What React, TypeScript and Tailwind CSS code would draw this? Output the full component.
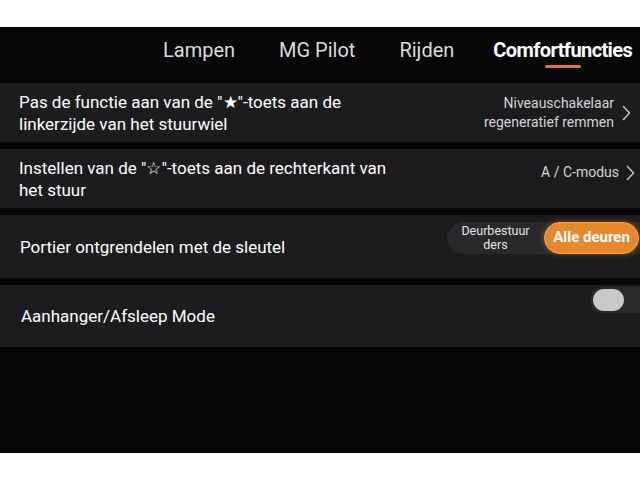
import React from "react";

const font = { fontFamily: "Roboto, 'Noto Sans', sans-serif" };

function Chevron() {
  return (
    <svg width="9" height="16" viewBox="0 0 9 16" className="shrink-0">
      <path d="M1.5 1.5 L7.5 8 L1.5 14.5" fill="none" stroke="#c8c8c8" strokeWidth="1.4" strokeLinecap="round" strokeLinejoin="round" />
    </svg>
  );
}

export default function App() {
  return (
    <div className="w-[640px] h-[480px] bg-white flex flex-col overflow-hidden" style={font}>
      <div className="h-[27px] shrink-0 bg-white" />
      <div className="h-[426px] shrink-0 bg-[#060607] flex flex-col">
        {/* Tabs */}
        <div className="h-[56px] shrink-0 flex items-start pl-[163px] pt-[10px] gap-[44px] text-[20px] text-[#dcdcdc] whitespace-nowrap">
          <span className="leading-[26px]">Lampen</span>
          <span className="leading-[26px]">MG Pilot</span>
          <span className="leading-[26px]">Rijden</span>
          <div className="flex flex-col items-center -ml-[5px]">
            <span className="leading-[26px] font-bold text-white tracking-[-0.6px]">Comfortfuncties</span>
            <div className="mt-[2px] w-[36px] h-[3px] rounded-full bg-[#e27a2e]" />
          </div>
        </div>
        {/* Rows */}
        <div className="flex flex-col gap-[7px]">
          <div className="h-[59px] bg-[#1c1c1e] flex items-center justify-between pl-[19px] pr-[9px]">
            <div className="text-[17px] leading-[22px] text-white">
              Pas de functie aan van de "★"-toets aan de
              <br />
              linkerzijde van het stuurwiel
            </div>
            <div className="flex items-center gap-[8px]">
              <div className="text-[14px] leading-[19px] text-[#d4d4d4] text-right">
                Niveauschakelaar
                <br />
                regeneratief remmen
              </div>
              <Chevron />
            </div>
          </div>
          <div className="h-[59px] bg-[#1c1c1e] flex items-center justify-between pl-[19px] pr-[5px]">
            <div className="text-[17px] leading-[22px] text-white">
              Instellen van de "☆"-toets aan de rechterkant van
              <br />
              het stuur
            </div>
            <div className="flex items-center gap-[7px] self-start mt-[14px]">
              <div className="text-[14px] leading-[19px] text-[#d4d4d4]">A / C-modus</div>
              <Chevron />
            </div>
          </div>
          <div className="h-[63px] bg-[#1c1c1e] flex items-center justify-between pl-[20px]">
            <div className="text-[17px] leading-[22px] text-white">Portier ontgrendelen met de sleutel</div>
            <div className="w-[194px] h-[32px] rounded-l-full bg-[#27292b] flex items-center -mt-[18px] -mr-[1px]">
              <div className="w-[97px] text-center text-[12.5px] leading-[14px] text-[#e6e6e6] flex flex-col">
                <span>Deurbestuur</span>
                <span>ders</span>
              </div>
              <div className="w-[95px] h-[32px] rounded-full bg-[#e8882c] border border-[#f4a44e] flex items-center justify-center text-[15px] font-bold text-white shadow-[0_0_6px_rgba(232,136,44,0.5)]">
                Alle deuren
              </div>
            </div>
          </div>
          <div className="h-[62px] bg-[#1c1c1e] flex items-center justify-between pl-[21px]">
            <div className="text-[17px] leading-[22px] text-white">Aanhanger/Afsleep Mode</div>
            <div className="w-[50px] h-[26px] rounded-l-full bg-[#2a2b2d] flex items-center pl-[3px] -mt-[32px]">
              <div className="w-[31px] h-[22px] rounded-full bg-[#c6cac9]" />
            </div>
          </div>
        </div>
      </div>
      <div className="flex-1 bg-white" />
    </div>
  );
}
